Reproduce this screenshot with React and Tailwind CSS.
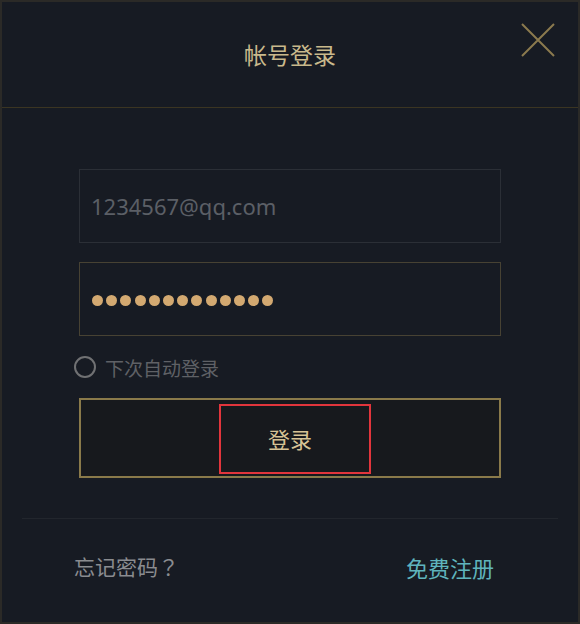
import React, { useState } from 'react';

// Account login dialog: title bar with close, account / password fields,
// auto-login toggle, login button and footer links.
const App = () => {
  const [remember, setRemember] = useState(false);
  const dots = Array.from({ length: 13 });

  return (
    <div
      className="w-[580px] h-[624px] bg-[#171b23] border-2 border-[#2b2a27] flex flex-col"
      style={{ fontFamily: '"Noto Sans CJK SC", "Noto Sans", sans-serif' }}
    >
      {/* Header */}
      <div className="relative h-[106px] shrink-0 flex items-center justify-center border-b border-[#3b3522]">
        <h1 className="text-[23px] text-[#c9b98c] leading-none">帐号登录</h1>
        <button className="absolute right-[23px] top-[21px] w-[34px] h-[34px]" title="关闭">
          <svg viewBox="0 0 34 34" className="w-full h-full" fill="none" stroke="#8b7a4e" strokeWidth="2">
            <path d="M1 1 L33 33 M33 1 L1 33" />
          </svg>
        </button>
      </div>

      {/* Form */}
      <div className="px-[77px] pt-[61px] flex flex-col">
        <div className="h-[74px] border border-[#2b2f36] flex items-center px-[11px]">
          <span className="text-[22px] text-[#5b5f66] leading-none" style={{ fontFamily: '"Noto Sans", sans-serif' }}>
            1234567@qq.com
          </span>
        </div>

        <div className="mt-[19px] h-[74px] border border-[#474233] flex items-center px-[12px]">
          <div className="flex gap-[3.2px] pt-[2px]">
            {dots.map((_, i) => (
              <span key={i} className="w-[11px] h-[11px] rounded-full bg-[#d3a971]" />
            ))}
          </div>
        </div>

        <label className="mt-[20px] -ml-[5px] h-[22px] flex items-center gap-[9px] cursor-pointer" onClick={() => setRemember(!remember)}>
          <span className="w-[22px] h-[22px] rounded-full border-2 border-[#707173]" />
          <span className="text-[19px] text-[#5f6166] leading-none">下次自动登录</span>
        </label>

        <button className="relative mt-[20px] h-[80px] border-2 border-[#8a7a4a] bg-[#17191d] flex items-center justify-center">
          <span className="text-[22px] text-[#d7c395] leading-none">登录</span>
          <span className="absolute left-[138px] top-[4px] w-[152px] h-[70px] border-2 border-[#e2353c]" />
        </button>
      </div>

      {/* Divider */}
      <div className="mt-[40px] mx-[20px] h-px bg-[#22262d]" />

      {/* Footer */}
      <div className="flex-1 flex items-center justify-between pl-[72px] pr-[84px] pb-[8px]">
        <span className="text-[21px] text-[#8a8c90] leading-none">
          忘记密码<span style={{ fontFamily: '"Noto Sans CJK JP", sans-serif' }}>？</span>
        </span>
        <span className="text-[22px] text-[#5fb4bd] leading-none">免费注册</span>
      </div>
    </div>
  );
};

export default App;
